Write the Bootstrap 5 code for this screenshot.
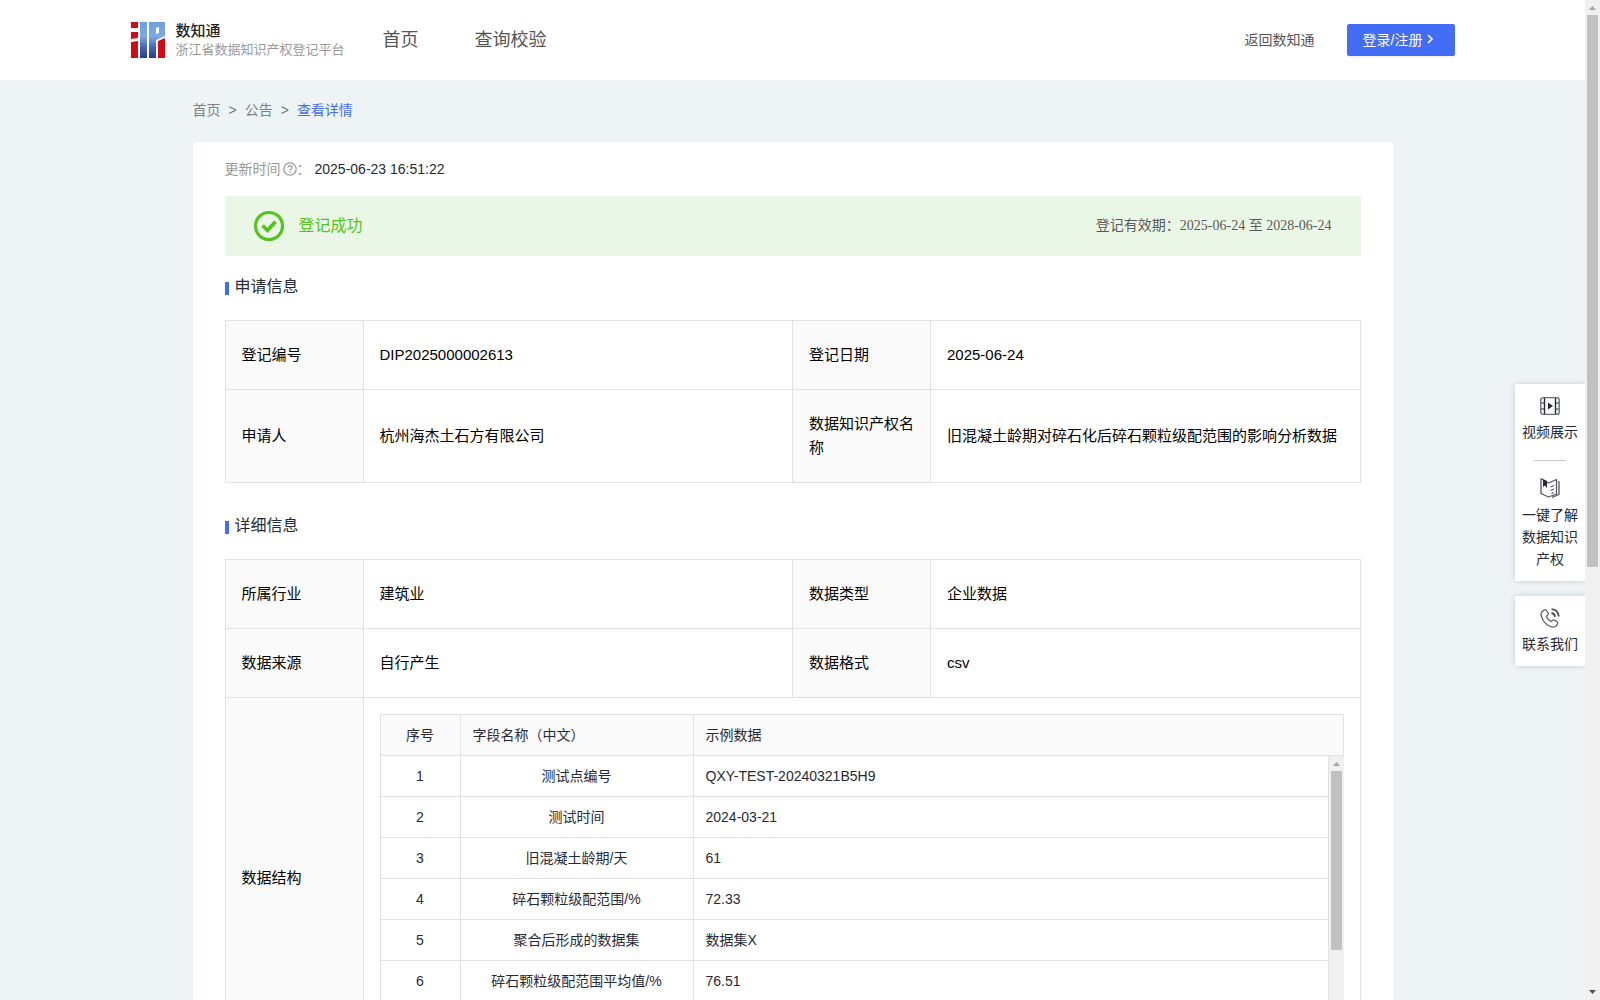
<!DOCTYPE html>
<html lang="zh-CN">
<head>
<meta charset="utf-8">
<meta name="viewport" content="width=device-width, initial-scale=1">
<title>浙江省数据知识产权登记平台</title>
<link href="https://cdn.jsdelivr.net/npm/bootstrap@5.3.0/dist/css/bootstrap.min.css" rel="stylesheet">
<style>
  :root { --brand: #446df6; --line: #e1e1e1; --soft: #fafafa; --ink: #272a36; }
  body { font-family: "Liberation Sans", "Noto Sans CJK SC", sans-serif; font-size: 14px; line-height: 22px; color: var(--ink); background: #eef3f6; }
  a { text-decoration: none; color: inherit; }
  .page-view { min-width: 0; }
  .site-header { height: 80px; }
  .header-inner { max-width: 1324px; }
  .page-wrap { max-width: 1200px; }
  .brand-text { width: 164px; margin-left: 11px; white-space: nowrap; }
  .brand-name { font-size: 15px; line-height: 20px; font-weight: 500; color: #222; }
  .brand-sub { font-size: 13px; line-height: 18px; color: #999; }
  .main-nav { gap: 56px; margin-left: 43px; font-size: 18px; color: #555; }
  .back-link { color: #555; }
  .login-btn { --bs-btn-color: #fff; --bs-btn-bg: var(--brand); --bs-btn-border-color: var(--brand); --bs-btn-hover-bg: #3159e0; --bs-btn-hover-color: #fff; --bs-btn-font-size: 14px; --bs-btn-line-height: 22px; --bs-btn-padding-y: 4px; --bs-btn-padding-x: 15px; --bs-btn-border-radius: 2px; width: 108px; box-shadow: 0 2px 0 rgba(0,0,0,.045); text-align: left; }
  .crumbs { --bs-breadcrumb-divider: ">"; --bs-breadcrumb-divider-color: #777; --bs-breadcrumb-item-active-color: var(--brand); --bs-breadcrumb-item-padding-x: 8px; --bs-breadcrumb-margin-bottom: 0; padding: 19px 0 21px; color: #808080; }
  .sheet { padding: 16px 32px 0; border-radius: 4px; }
  .hint { color: #999; }
  .ok-bar { height: 60px; margin-top: 16px; padding: 0 29px 0 28px; background: #ebf7e6; }
  .ok-text { font-size: 16px; color: #52c41a; margin-left: 14px; }
  .valid-text { font-family: "Liberation Serif", "Noto Sans CJK SC", serif; color: #595959; }
  .sec-title { font-size: 16px; line-height: 24px; font-weight: 400; margin: 19px 0 21px; gap: 6px; }
  .sec-title::before { content: ""; width: 4px; height: 13px; background: var(--brand); margin-top: 3px; }
  .info-table { table-layout: fixed; margin: 0 0 31px; font-size: 15px; line-height: 24px; color: #000; vertical-align: middle; --bs-table-color: #000; }
  .info-table > tbody > tr > * { border: 1px solid var(--line); padding: 22px 16px; font-weight: 400; }
  .info-table > tbody > tr > th { background: var(--soft); }
  .info-table .label-col { width: 138px; }
  .info-table > tbody > tr > .field-cell { padding: 16px; }
  .field-table { table-layout: fixed; margin: 0; border-collapse: separate; border-spacing: 0; border-left: 1px solid var(--line); font-size: 14px; line-height: 22px; color: var(--ink); --bs-table-color: var(--ink); }
  .field-table th, .field-table td { border: 0 solid var(--line); border-width: 0 1px 1px 0; padding: 9px 12px; font-weight: 400; }
  .field-table thead th { border-top-width: 1px; background: var(--soft); }
  .c-index { width: 80px; }
  .c-name { width: 233px; }
  .field-scroll { height: 286px; }
  .bar-track { width: 15px; background: #f0f0f0; flex: none; }
  .bar-thumb { width: 11px; background: #c1c1c1; }
  .side-tools { position: absolute; right: 0; top: 384px; width: 70px; gap: 15px; text-align: center; }
  .tool-box { background: #fff; padding: 12px 6px 11px; box-shadow: 0 0 6px rgba(0,0,0,.16); }
  .tool-box svg { display: block; margin: 0 auto 5px; }
  .tool-box hr { width: 32px; margin: 17px auto; border-color: #ccc; opacity: 1; }
  .tool-box hr + a svg { margin-bottom: 6px; }
</style>
</head>
<body>
<div class="d-flex vh-100 overflow-hidden">
  <div class="page-view flex-grow-1 position-relative overflow-hidden">
    <header class="site-header bg-white d-flex">
      <div class="header-inner container-fluid px-0 d-flex align-items-center">
        <a href="#" class="d-flex align-items-center">
          <svg width="34" height="36" viewBox="0 0 34 36" aria-hidden="true">
            <defs><linearGradient id="lg" x1="0" y1="0" x2="0" y2="1"><stop offset="0" stop-color="#6fa0dc"/><stop offset=".4" stop-color="#7ba9e2"/><stop offset=".7" stop-color="#4168b2"/><stop offset="1" stop-color="#233d8c"/></linearGradient></defs>
            <path fill="#d20a11" d="M0 0h7v6H0zM0 10h7v6l-7 1zM0 20l7-1v17H0zM27 19l7-3v20h-7z"/>
            <path fill="url(#lg)" d="M9 0h7v36H9zM18 0h16v14l-9 4v18h-7zM25 6v6l3-1V5z" fill-rule="evenodd"/>
          </svg>
          <span class="brand-text d-flex flex-column">
            <span class="brand-name">数知通</span>
            <span class="brand-sub">浙江省数据知识产权登记平台</span>
          </span>
        </a>
        <nav class="main-nav d-flex"><a href="#">首页</a><a href="#">查询校验</a></nav>
        <a href="#" class="back-link ms-auto me-4 pe-2">返回数知通</a>
        <button type="button" class="btn login-btn">登录/注册<svg class="ms-1 mb-1" width="8" height="10" viewBox="0 0 8 10" fill="none" stroke="#fff" stroke-width="1.6" aria-hidden="true"><path d="M2 1l4 4-4 4"/></svg></button>
      </div>
    </header>
    <main class="page-wrap container-fluid px-0">
      <nav aria-label="breadcrumb">
        <ol class="breadcrumb crumbs">
          <li class="breadcrumb-item"><a href="#">首页</a></li>
          <li class="breadcrumb-item"><a href="#">公告</a></li>
          <li class="breadcrumb-item active" aria-current="page">查看详情</li>
        </ol>
      </nav>
      <section class="sheet bg-white">
        <div class="d-flex align-items-center">
          <span class="hint">更新时间</span>
          <svg width="16" height="14" viewBox="0 0 16 14" fill="none" stroke="#999" stroke-width="1.3" aria-hidden="true"><circle cx="9" cy="7" r="6.2"/><path d="M7 5.600c0-2.600 4-2.400 4 0 0 1.500-2 1.300-2 2.800M9 9.400v1.300"/></svg>
          <span class="hint">：</span>
          <span class="ms-1">2025-06-23 16:51:22</span>
        </div>
        <div class="ok-bar d-flex align-items-center">
          <svg width="32" height="32" viewBox="0 0 32 32" fill="none" stroke="#52c41a" aria-hidden="true"><circle cx="16" cy="16" r="13.500" stroke-width="3.200"/><path d="M9.500 15.500l5 4.800 8-8.500" stroke-width="3.800"/></svg>
          <span class="ok-text">登记成功</span>
          <span class="valid-text ms-auto">登记有效期：2025-06-24 至 2028-06-24</span>
        </div>

        <h2 class="sec-title d-flex align-items-center">申请信息</h2>
        <table class="table info-table">
          <colgroup><col class="label-col"><col><col class="label-col"><col></colgroup>
          <tbody>
            <tr><th scope="row">登记编号</th><td>DIP2025000002613</td><th scope="row">登记日期</th><td>2025-06-24</td></tr>
            <tr><th scope="row">申请人</th><td>杭州海杰土石方有限公司</td><th scope="row">数据知识产权名称</th><td>旧混凝土龄期对碎石化后碎石颗粒级配范围的影响分析数据</td></tr>
          </tbody>
        </table>

        <h2 class="sec-title d-flex align-items-center">详细信息</h2>
        <table class="table info-table">
          <colgroup><col class="label-col"><col><col class="label-col"><col></colgroup>
          <tbody>
            <tr><th scope="row">所属行业</th><td>建筑业</td><th scope="row">数据类型</th><td>企业数据</td></tr>
            <tr><th scope="row">数据来源</th><td>自行产生</td><th scope="row">数据格式</th><td>csv</td></tr>
            <tr><th scope="row">数据结构</th><td colspan="3" class="field-cell">
              <table class="table field-table">
                <colgroup><col class="c-index"><col class="c-name"><col></colgroup>
                <thead><tr><th class="text-center">序号</th><th>字段名称（中文）</th><th>示例数据</th></tr></thead>
              </table>
              <div class="field-scroll d-flex overflow-hidden">
                <div class="flex-grow-1">
                  <table class="table field-table">
                    <colgroup><col class="c-index"><col class="c-name"><col></colgroup>
                    <tbody>
                      <tr><td class="text-center">1</td><td class="text-center">测试点编号</td><td>QXY-TEST-20240321B5H9</td></tr>
                      <tr><td class="text-center">2</td><td class="text-center">测试时间</td><td>2024-03-21</td></tr>
                      <tr><td class="text-center">3</td><td class="text-center">旧混凝土龄期/天</td><td>61</td></tr>
                      <tr><td class="text-center">4</td><td class="text-center">碎石颗粒级配范围/%</td><td>72.33</td></tr>
                      <tr><td class="text-center">5</td><td class="text-center">聚合后形成的数据集</td><td>数据集X</td></tr>
                      <tr><td class="text-center">6</td><td class="text-center">碎石颗粒级配范围平均值/%</td><td>76.51</td></tr>
                    </tbody>
                  </table>
                </div>
                <div class="bar-track d-flex flex-column align-items-center" aria-hidden="true">
                  <svg width="15" height="15" viewBox="0 0 15 15"><path fill="#a3a3a3" d="M4 10l3.500-4 3.500 4z"/></svg>
                  <div class="bar-thumb" style="height:70%; max-height:179px"></div>
                </div>
              </div>
            </td></tr>
          </tbody>
        </table>
      </section>
    </main>
    <aside class="side-tools d-flex flex-column">
      <div class="tool-box">
        <a href="#" class="d-block">
          <svg width="20" height="20" viewBox="0 0 20 20" fill="none" stroke="#6b6e78" stroke-width="1.400" aria-hidden="true"><rect x=".8" y="1.600" width="18.400" height="16.800" rx="2.500"/><path d="M1 7h3.500M1 13h3.500M15.500 7H19M15.500 13H19"/><path d="M4.500 2v16M15.500 2v16" stroke="#272a36"/><path d="M8 6.500v7l5-3.500z" fill="#272a36" stroke="none"/></svg>
          视频展示</a>
        <hr>
        <a href="#" class="d-block">
          <svg width="20" height="20" viewBox="0 0 20 20" fill="none" stroke="#555864" stroke-width="1.300" stroke-linejoin="round" aria-hidden="true"><path d="M3 1.500L1 1v14.500l7.500 3.500 8-3V1.500L8.500 5 7 4.200"/><path d="M18 3.500l1 .3v12.700L12 19.300"/><path d="M10.500 9l3.500-1.500M10.500 12.500l3.500-1.500M11.500 15.500l2-.8"/><path d="M3 1v8l2-1.500L7 10V3z" fill="#272a36" stroke="none"/></svg>
          一键了解数据知识产权</a>
      </div>
      <div class="tool-box">
        <a href="#" class="d-block">
          <svg width="20" height="20" viewBox="0 0 20 20" fill="none" stroke="#6b6e78" stroke-width="1.400" aria-hidden="true"><path d="M4.500 1.800C2 3 .6 5.200 1.300 8c1.200 5 5.300 9.500 10.200 10.900 2.500.7 5-.7 6-2.900.4-.9.200-1.700-.5-2.200l-2.500-1.600c-.8-.5-1.500-.4-2.100.2l-1.200 1.100C9 12.500 7.200 10.500 6.400 8.400l1.300-1.300c.5-.5.7-1.200.3-1.900L6.500 2.500c-.5-.8-1.200-1.100-2-.7z"/><path d="M11.500 1.200c4 .3 6.800 3.200 7.300 7.300M11.500 5c2.200.3 3.300 1.600 3.700 3.800" stroke="#4a4d58" stroke-width="1.800"/></svg>
          联系我们</a>
      </div>
    </aside>
  </div>
  <div class="bar-track d-flex flex-column align-items-center" aria-hidden="true">
    <svg class="flex-shrink-0" width="15" height="15" viewBox="0 0 15 15"><path fill="#a3a3a3" d="M4 10l3.500-4 3.500 4z"/></svg>
    <div class="bar-thumb" style="height:55.2%"></div>
    <svg class="flex-shrink-0 mt-auto" width="15" height="15" viewBox="0 0 15 15"><path fill="#505050" d="M4 5l3.500 4L11 5z"/></svg>
  </div>
</div>
<script src="https://cdn.jsdelivr.net/npm/bootstrap@5.3.0/dist/js/bootstrap.bundle.min.js"></script>
</body>
</html>
